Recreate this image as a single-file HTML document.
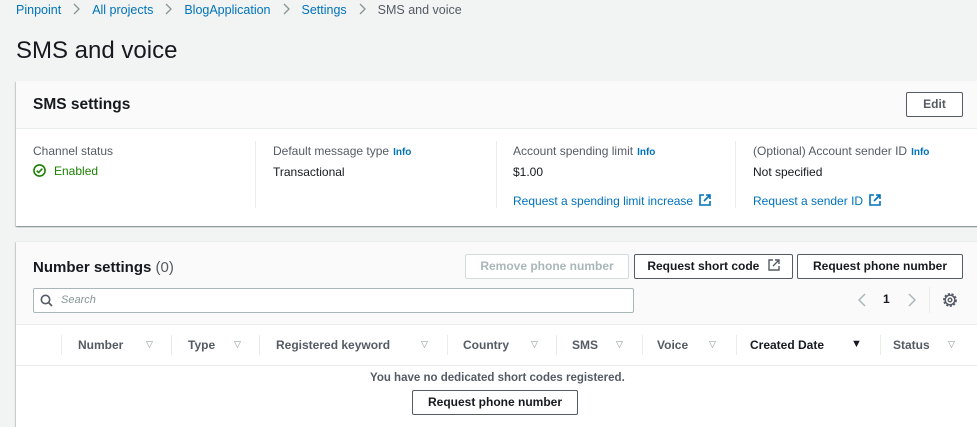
<!DOCTYPE html>
<html><head><style>
*{box-sizing:border-box;margin:0;padding:0}
html{overflow:hidden;height:427px}
body{width:977px;height:427px;overflow:hidden;background:#f2f3f3;font-family:"Liberation Sans",sans-serif;color:#16191f;position:relative;font-size:12px}
.a{position:absolute;white-space:nowrap}
.link{color:#0073bb}
.info{color:#0073bb;font-weight:bold;font-size:10px;margin-left:4px}
.btn{position:absolute;border:1px solid #545b64;background:#fff;border-radius:2px;font-weight:bold;font-size:12px;color:#545b64;text-align:center;line-height:23px}
.lbl{color:#545b64}
.th{position:absolute;top:338px;font-weight:bold;color:#545b64;font-size:12px}
.tri{position:absolute;top:339px;color:#879596;font-size:9px}
.sep{position:absolute;top:335px;width:1px;height:20px;background:#eaeded}
.chev{margin:0 12px;vertical-align:-1px}
</style></head><body>
<div class="a" style="left:16px;top:3px;font-size:12.5px"><span class="link">Pinpoint</span><svg class="chev" width="7" height="12" viewBox="0 0 7 12"><path d="M1 1l5 5-5 5" fill="none" stroke="#879596" stroke-width="1.3"/></svg><span class="link">All projects</span><svg class="chev" width="7" height="12" viewBox="0 0 7 12"><path d="M1 1l5 5-5 5" fill="none" stroke="#879596" stroke-width="1.3"/></svg><span class="link">BlogApplication</span><svg class="chev" width="7" height="12" viewBox="0 0 7 12"><path d="M1 1l5 5-5 5" fill="none" stroke="#879596" stroke-width="1.3"/></svg><span class="link">Settings</span><svg class="chev" width="7" height="12" viewBox="0 0 7 12"><path d="M1 1l5 5-5 5" fill="none" stroke="#879596" stroke-width="1.3"/></svg><span style="color:#545b64">SMS and voice</span></div>
<div class="a" style="left:16px;top:37px;font-size:24px">SMS and voice</div>

<div class="a" style="left:16px;top:81px;width:970px;height:145px;background:#fff;box-shadow:0 1px 1px rgba(0,28,36,.3),1px 1px 1px rgba(0,28,36,.15),-1px 1px 1px rgba(0,28,36,.15)">
 <div style="height:48px;background:#fafafa;border-bottom:1px solid #eaeded"></div>
</div>
<div class="a" style="left:33px;top:96px;font-size:15.5px;font-weight:bold">SMS settings</div>
<div class="btn" style="left:906px;top:92px;width:57px;height:25px">Edit</div>
<div class="a" style="left:255px;top:141px;width:1px;height:67px;background:#eaeded"></div>
<div class="a" style="left:496px;top:141px;width:1px;height:67px;background:#eaeded"></div>
<div class="a" style="left:735px;top:141px;width:1px;height:67px;background:#eaeded"></div>
<div class="a lbl" style="left:33px;top:144px">Channel status</div>
<div class="a" style="left:33px;top:164px;color:#1d8102"><svg width="13" height="13" viewBox="0 0 14 14" style="vertical-align:-2px;margin-right:8px"><circle cx="7" cy="7" r="6" fill="none" stroke="#1d8102" stroke-width="1.7"/><path d="M4 7.2l2.1 2L10 5" fill="none" stroke="#1d8102" stroke-width="1.7"/></svg>Enabled</div>
<div class="a lbl" style="left:273px;top:144px">Default message type<span class="info">Info</span></div>
<div class="a" style="left:273px;top:165px">Transactional</div>
<div class="a lbl" style="left:513px;top:144px">Account spending limit<span class="info">Info</span></div>
<div class="a" style="left:513px;top:165px">$1.00</div>
<div class="a link" style="left:513px;top:194px">Request a spending limit increase <svg width="12" height="12" viewBox="0 0 12 12" style="vertical-align:-1px;margin-left:3px"><path d="M5 1H1v10h10V7M7 1h4v4M11 1L5 7" fill="none" stroke="#0073bb" stroke-width="1.6"/></svg></div>
<div class="a lbl" style="left:753px;top:144px">(Optional) Account sender ID<span class="info">Info</span></div>
<div class="a" style="left:753px;top:165px">Not specified</div>
<div class="a link" style="left:753px;top:194px">Request a sender ID <svg width="12" height="12" viewBox="0 0 12 12" style="vertical-align:-1px;margin-left:3px"><path d="M5 1H1v10h10V7M7 1h4v4M11 1L5 7" fill="none" stroke="#0073bb" stroke-width="1.6"/></svg></div>

<div class="a" style="left:16px;top:242px;width:970px;height:190px;background:#fff;box-shadow:0 1px 1px rgba(0,28,36,.3),-1px 0 1px rgba(0,28,36,.15)">
 <div style="height:83px;background:#fafafa;border-bottom:1px solid #eaeded"></div>
 <div style="height:41px;background:#fff;border-bottom:1px solid #eaeded"></div>
</div>
<div class="a" style="left:33px;top:259px;font-size:15px;font-weight:bold">Number settings <span style="font-weight:normal;color:#545b64">(0)</span></div>
<div class="btn" style="left:465px;top:254px;width:164px;height:25px;border-color:#d5dbdb;color:#aab7b8">Remove phone number</div>
<div class="btn" style="left:634px;top:254px;width:159px;height:25px;color:#16191f">Request short code <svg width="12" height="12" viewBox="0 0 12 12" style="vertical-align:-1px;margin-left:5px"><path d="M5 1H1v10h10V7M7 1h4v4M11 1L5 7" fill="none" stroke="#545b64" stroke-width="1.4"/></svg></div>
<div class="btn" style="left:797px;top:254px;width:166px;height:25px;color:#16191f">Request phone number</div>
<div class="a" style="left:33px;top:288px;width:601px;height:25px;background:#fff;border:1px solid #aab7b8;border-radius:2px"></div>
<svg class="a" style="left:40px;top:294px" width="13" height="13" viewBox="0 0 13 13"><circle cx="5.5" cy="5.5" r="4.2" fill="none" stroke="#545b64" stroke-width="1.6"/><path d="M8.5 8.5l3.5 3.5" stroke="#545b64" stroke-width="1.6"/></svg>
<div class="a" style="left:61px;top:294px;font-style:italic;color:#879596;font-size:11px">Search</div>
<svg class="a" style="left:858px;top:293px" width="8" height="14" viewBox="0 0 8 14"><path d="M7 1L1 7l6 6" fill="none" stroke="#aab7b8" stroke-width="1.5"/></svg>
<div class="a" style="left:883px;top:292px;font-weight:bold;font-size:12px">1</div>
<svg class="a" style="left:908px;top:293px" width="8" height="14" viewBox="0 0 8 14"><path d="M1 1l6 6-6 6" fill="none" stroke="#aab7b8" stroke-width="1.5"/></svg>
<div class="a" style="left:929px;top:287px;width:1px;height:26px;background:#eaeded"></div>
<svg class="a" style="left:942px;top:292px" width="16" height="16" viewBox="0 0 16 16"><circle cx="8" cy="8" r="6" fill="none" stroke="#545b64" stroke-width="1.8" stroke-dasharray="2.2 1.5"/><circle cx="8" cy="8" r="4.8" fill="none" stroke="#545b64" stroke-width="1.4"/><circle cx="8" cy="8" r="1.8" fill="none" stroke="#545b64" stroke-width="1.4"/></svg>

<div class="sep" style="left:61px"></div><div class="sep" style="left:171px"></div><div class="sep" style="left:259px"></div><div class="sep" style="left:447px"></div><div class="sep" style="left:556px"></div><div class="sep" style="left:642px"></div><div class="sep" style="left:736px"></div><div class="sep" style="left:880px"></div>
<div class="th" style="left:78px">Number</div><div class="tri" style="left:146px">&#9661;</div>
<div class="th" style="left:188px">Type</div><div class="tri" style="left:234px">&#9661;</div>
<div class="th" style="left:276px">Registered keyword</div><div class="tri" style="left:421px">&#9661;</div>
<div class="th" style="left:463px">Country</div><div class="tri" style="left:531px">&#9661;</div>
<div class="th" style="left:572px">SMS</div><div class="tri" style="left:616px">&#9661;</div>
<div class="th" style="left:657px">Voice</div><div class="tri" style="left:709px">&#9661;</div>
<div class="th" style="left:750px;color:#16191f">Created Date</div><div class="tri" style="left:851px;color:#16191f;font-size:11px;top:338px">&#9660;</div>
<div class="th" style="left:893px">Status</div><div class="tri" style="left:948px">&#9661;</div>

<div class="a" style="left:370px;top:372px;font-weight:bold;color:#545b64;font-size:11.5px">You have no dedicated short codes registered.</div>
<div class="btn" style="left:412px;top:390px;width:166px;height:25px;color:#16191f">Request phone number</div>
</body></html>
